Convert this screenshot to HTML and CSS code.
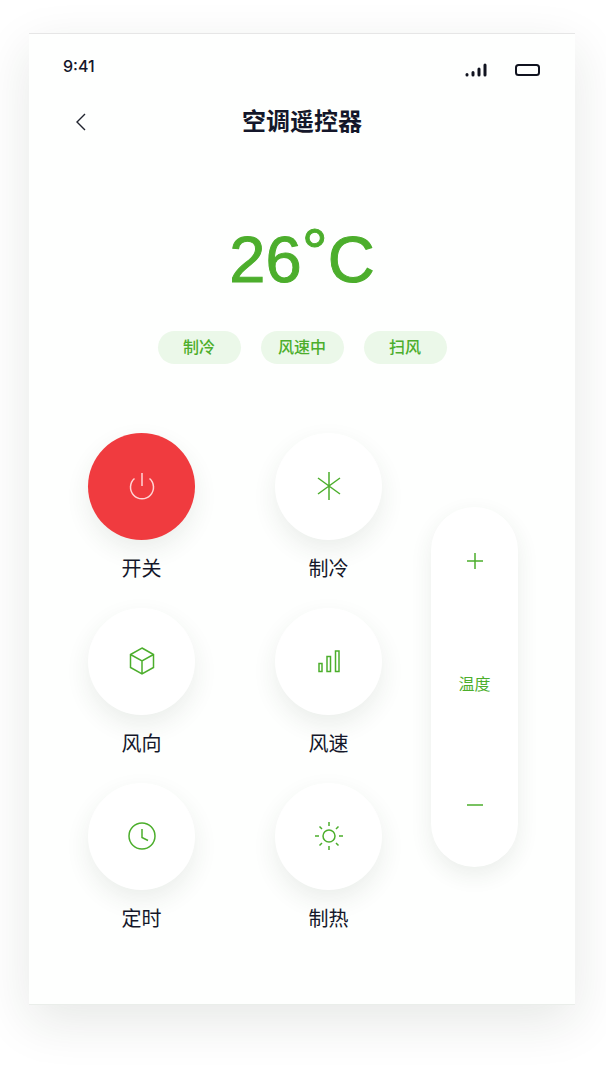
FILE: index.html
```html
<!DOCTYPE html>
<html lang="zh-CN">
<head>
    <meta charset="UTF-8">
    <meta name="viewport" content="width=device-width, initial-scale=1.0">
    <title>空调遥控器</title>
    <link rel="stylesheet" href="styles.css">
</head>
<body>
    <div class="wrapper">
        <!-- 状态栏 -->
        <div class="status">
            <span class="time">9:41</span>
            <div class="status-icons">
                <svg width="22" height="14" viewBox="0 0 22 14" fill="none" stroke="#10131f" stroke-width="3" stroke-linecap="round">
                    <path d="M2 11.5v.5M8 9.5V12M14 6v6M20 2v10"/>
                </svg>
                <svg width="26" height="12" viewBox="0 0 26 12" fill="none" stroke="#10131f" stroke-width="2">
                    <rect x="1" y="1" width="23" height="10" rx="2.5"/>
                </svg>
            </div>
        </div>
        <!-- 标题 -->
        <div class="header">
            <button class="back" type="button" aria-label="返回">
                <svg width="12" height="18" viewBox="0 0 12 18" fill="none" stroke="#20232e" stroke-width="1.4">
                    <path d="M10 1L2 9l8 8"/>
                </svg>
            </button>
            <h1>空调遥控器</h1>
        </div>
        <!-- 当前状态 -->
        <div class="temp">26<span class="degree">°</span>C</div>
        <ul class="tags">
            <li>制冷</li>
            <li>风速中</li>
            <li>扫风</li>
        </ul>
        <!-- 按键 -->
        <div class="panel">
            <div class="keys">
                <button class="key power" type="button">
                    <span class="circle">
                        <svg width="28" height="28" viewBox="0 0 28 28">
                            <path d="M14 1v13M6.5 6.5a11.5 11.5 0 1 0 15 0"/>
                        </svg>
                    </span>
                    <span class="name">开关</span>
                </button>
                <button class="key" type="button">
                    <span class="circle">
                        <svg width="28" height="28" viewBox="0 0 28 28">
                            <path d="M14 0v28M3 6l22 16M25 6L3 22"/>
                        </svg>
                    </span>
                    <span class="name">制冷</span>
                </button>
                <button class="key" type="button">
                    <span class="circle">
                        <svg width="28" height="28" viewBox="0 0 28 28">
                            <path d="M14 1l11.5 6.5v13L14 27 2.5 20.5v-13zM2.5 7.5L14 14l11.5-6.5M14 14v13"/>
                        </svg>
                    </span>
                    <span class="name">风向</span>
                </button>
                <button class="key" type="button">
                    <span class="circle">
                        <svg width="28" height="28" viewBox="0 0 28 28">
                            <path d="M4 16.5h3v8H4zM12 9.500h3.500v15H12zM20.500 4H24v20.500h-3.500z"/>
                        </svg>
                    </span>
                    <span class="name">风速</span>
                </button>
                <button class="key" type="button">
                    <span class="circle">
                        <svg width="28" height="28" viewBox="0 0 28 28">
                            <circle cx="14" cy="14" r="13"/>
                            <path d="M14 7v8.5l6 3"/>
                        </svg>
                    </span>
                    <span class="name">定时</span>
                </button>
                <button class="key" type="button">
                    <span class="circle">
                        <svg width="28" height="28" viewBox="0 0 28 28">
                            <circle cx="14" cy="14" r="6"/>
                            <path d="M14 0v4M14 24v4M0 14h4M24 14h4M4.5 4.5L7 7M21 21l2.5 2.5M23.5 4.5L21 7M7 21l-2.5 2.5"/>
                        </svg>
                    </span>
                    <span class="name">制热</span>
                </button>
            </div>
            <!-- 温度调节 -->
            <div class="adjust">
                <button type="button" aria-label="升温">
                    <svg width="16" height="16" viewBox="0 0 16 16"><path d="M8 0v16M0 8h16"/></svg>
                </button>
                <span>温度</span>
                <button type="button" aria-label="降温">
                    <svg width="16" height="16" viewBox="0 0 16 16"><path d="M0 8h16"/></svg>
                </button>
            </div>
        </div>
    </div>
</body>
</html>
```
FILE: styles.css
```css
*{
    padding: 0;
    margin: 0;
    list-style: none;
    box-sizing: border-box;
}
body{
    padding: 33px 31px 74px 29px;
    background: #fff;
    color: #14172a;
    font-family: "Liberation Sans", "Noto Sans CJK SC", sans-serif;
}
button{
    border: none;
    background: none;
    color: inherit;
    font-family: inherit;
    cursor: pointer;
}
svg{
    display: block;
}

.wrapper{
    padding-bottom: 70px;
    background: #fefffe;
    border-top: 1px solid #e6e6e6;
    border-bottom: 1px solid #eaeeea;
    box-shadow: 0 16px 48px rgba(30, 50, 30, 0.11);
}

/* 状态栏 */
.status{
    display: flex;
    justify-content: space-between;
    height: 64px;
    padding: 22px 34px 0;
}
.time{
    font-family: Inter, sans-serif;
    font-size: 16px;
    font-weight: 500;
    line-height: 20px;
}
.status-icons{
    display: flex;
    align-items: center;
    gap: 28px;
    height: 28px;
}

/* 标题 */
.header{
    display: grid;
    grid-template-columns: 40px 1fr 40px;
    align-items: center;
    height: 48px;
    padding: 0 34px;
}
.back{
    display: flex;
    align-items: center;
    height: 40px;
    padding-left: 12px;
}
.header h1{
    font-size: 24px;
    font-weight: 700;
    line-height: 48px;
    text-align: center;
}

/* 当前状态 */
.temp{
    margin-top: 76px;
    color: #4cae2c;
    font-size: 65px;
    line-height: 76px;
    text-align: center;
    -webkit-text-stroke: 1px #4cae2c;
}
.degree{
    line-height: 0;
    vertical-align: 8px;
}
.tags{
    display: flex;
    justify-content: center;
    gap: 20px;
    margin-top: 33px;
}
.tags li{
    width: 83px;
    border-radius: 17px;
    background: #ebf8e9;
    color: #4cae2c;
    font-size: 16px;
    font-weight: 500;
    line-height: 33px;
    text-align: center;
}

/* 按键 */
.panel{
    display: flex;
    justify-content: space-between;
    align-items: flex-start;
    margin-top: 69px;
    padding: 0 57px 0 59px;
}
.keys{
    display: grid;
    grid-template-columns: 107px 107px;
    gap: 24px 80px;
}
.circle{
    display: flex;
    align-items: center;
    justify-content: center;
    height: 107px;
    padding-bottom: 2px;
    border-radius: 50%;
    background: #fff;
    box-shadow: 0 10px 24px rgba(40, 70, 40, 0.09);
}
.key svg, .adjust svg{
    fill: none;
    stroke: #4cae2c;
    stroke-width: 1.5;
}
.power .circle{
    background: #f03b3f;
}
.key.power svg{
    stroke: #ffd5d5;
}
.name{
    display: block;
    margin-top: 14px;
    font-size: 20px;
    line-height: 30px;
}

/* 温度调节 */
.adjust{
    display: flex;
    flex-direction: column;
    align-items: center;
    justify-content: space-between;
    width: 87px;
    height: 360px;
    margin-top: 74px;
    padding: 34px 0 42px;
    border-radius: 44px;
    background: #fff;
    color: #4cae2c;
    font-size: 16px;
    box-shadow: 0 8px 22px rgba(40, 70, 40, 0.09);
}
.adjust button{
    padding: 12px;
}
```
